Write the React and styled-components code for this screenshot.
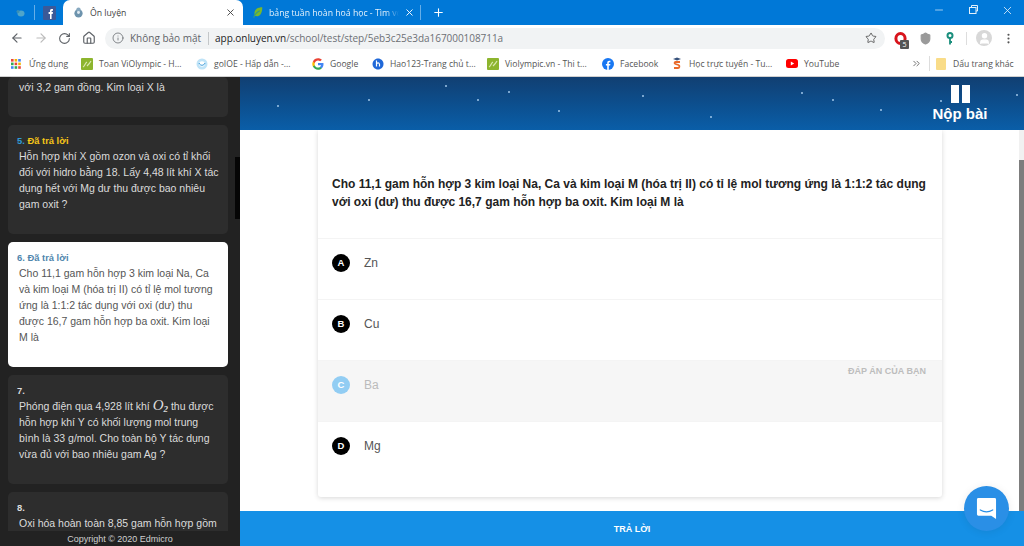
import React from "react";
import styled, { createGlobalStyle } from "styled-components";
import { ArrowLeft, ArrowRight, RotateCw, Home, Info, Star, X, Plus, Minus, MoreVertical, User, Shield, ChevronsRight } from "lucide-react";

const Global = createGlobalStyle`
  html, body { margin: 0; padding: 0; height: 100%; overflow: hidden; background: #fff; }
  * { box-sizing: border-box; }
  #root { height: 100%; }
`;

const Shell = styled.div`
  width: 1024px; height: 546px; display: flex; flex-direction: column; overflow: hidden;
  font-family: "Liberation Sans", Arial, sans-serif;
`;
const TabStrip = styled.div`
  height: 25px; background: #0078d7; display: flex; align-items: flex-end; color: #fff;
  font-family: "Open Sans", "Noto Sans", sans-serif; font-size: 8.7px; flex: none;
`;
const PinnedTab = styled.div`
  width: ${p => p.$w}px; height: 25px; padding-left: ${p => p.$pl || 0}px; display: flex; align-items: center; justify-content: center; flex: none;
`;
const TabSep = styled.div`width: 1px; height: 15px; background: #66aee8; margin-bottom: 5px; flex: none;`;
const ActiveTab = styled.div`
  width: 180px; height: 25px; background: #fff; color: #444; border-radius: 7px 7px 0 0;
  display: flex; align-items: center; gap: 6px; padding: 0 7px 0 10px; flex: none;
`;
const InactiveTab = styled.div`
  width: 177px; height: 25px; display: flex; align-items: center; gap: 5px; padding: 0 5px 0 9px; flex: none; color: #e4f1fb;
`;
const TabTitle = styled.span`
  flex: 1; min-width: 0; white-space: nowrap; overflow: hidden;
  mask-image: ${p => p.$fade ? "linear-gradient(90deg,#000 90%,transparent)" : "none"};
`;
const TabClose = styled.span`display: flex; flex: none; color: ${p => p.$c};`;
const NewTab = styled.div`width: 34px; height: 25px; display: flex; align-items: center; justify-content: center; flex: none;`;
const WinControls = styled.div`
  margin-left: auto; height: 25px; display: flex; align-items: flex-start; padding-top: 4px; gap: 22px; padding-right: 10px;
  color: #cfe6f8;
`;
const Toolbar = styled.div`
  height: 26px; background: #fff; display: flex; align-items: center; flex: none; padding: 0 0 0 10px; color: #555;
`;
const NavButton = styled.div`
  width: ${p => p.$w || 24}px; display: flex; align-items: center; justify-content: flex-start; color: ${p => p.$c || "#5f6368"}; flex: none;
`;
const Omnibox = styled.div`
  width: 780px; height: 21px; margin-left: 1px; background: #f1f3f4; border-radius: 11px; display: flex; align-items: center;
  padding: 0 8px 0 7px; font-family: "Open Sans", "Noto Sans", sans-serif; font-size: 10px; color: #5f6368; flex: none;
`;
const SecurityText = styled.span`margin-left: 6px; padding-right: 7px; border-right: 1px solid #c4c7c9; line-height: 13px; white-space: nowrap;`;
const Url = styled.span`margin-left: 6px; color: #6d7074; white-space: nowrap; flex: 1; letter-spacing: -0.05px; b { font-weight: 400; color: #222; }`;
const Extensions = styled.div`display: flex; align-items: center; margin-left: 6px;`;
const ExtIcon = styled.div`width: ${p => p.$w}px; display: flex; align-items: center; justify-content: center; position: relative; flex: none;`;
const ExtBadge = styled.span`
  position: absolute; right: 1px; bottom: -4px; width: 9px; height: 9px; background: #555; color: #fff;
  font-size: 7px; line-height: 9px; text-align: center; border-radius: 1px; font-family: "Open Sans", sans-serif;
`;
const ToolSep = styled.div`width: 1px; height: 13px; background: #ddd; margin: 0 9px 0 6px; flex: none;`;
const Avatar = styled.div`
  width: 16px; height: 16px; border-radius: 50%; background: #d8d8d8; display: flex; align-items: center; justify-content: center; color: #fff; flex: none;
`;
const Bookmarks = styled.div`
  height: 26px; background: #fff; display: flex; align-items: center; padding: 0 0 0 11px; flex: none;
  font-family: "Open Sans", "Noto Sans", sans-serif; font-size: 8.6px; color: #555;
  border-bottom: 1px solid #d0d0d0;
`;
const Bookmark = styled.div`
  width: ${p => p.$w}px; display: flex; align-items: center; gap: ${p => p.$gap || 6}px; white-space: nowrap; flex: none;
`;
const OverflowBtn = styled.div`margin-left: 24px; width: 16px; color: #666; display: flex; flex: none;`;
const BmSep = styled.div`width: 1px; height: 15px; background: #ddd; margin: 0 6px 0 2px; flex: none;`;

const Page = styled.div`flex: 1; min-height: 0; display: flex;`;
const Sidebar = styled.aside`
  width: 240px; flex: none; background: #222; display: flex; flex-direction: column; color: #e2e2e2; position: relative;
`;
const SideThumb = styled.div`position: absolute; right: 0; top: 80px; width: 5px; height: 62px; background: #050505;`;
const QuestionList = styled.div`
  height: 454px; flex: none; overflow: hidden; padding: 0 12px 0 8px; display: flex; flex-direction: column; gap: 8px;
`;
const QCard = styled.div`
  height: ${p => p.$h}px; flex: none; border-radius: 5px; padding: ${p => p.$top ? "2px 9px 0 11px" : "10px 9px 0 11px"};
  background: ${p => p.$active ? "#fff" : "#2d2d2d"}; color: ${p => p.$active ? "#555" : "#dcdcdc"};
  font-size: 10.5px; line-height: 16px;
`;
const QStatus = styled.div`
  font-size: 9.4px; font-weight: 700; line-height: 12px; margin: 0 0 1px -2px;
  color: ${p => p.$active ? "#4f86ad" : p.$done ? "#f5c518" : "#ddd"};
  span { color: ${p => p.$active ? "#4f86ad" : p.$done ? "#2f9bd6" : "#ddd"}; }
`;
const QBody = styled.div`margin: 0;`;
const Formula = styled.span`
  font-family: "Liberation Serif", serif; font-style: italic; font-size: 15px; line-height: 0;
  sub { font-size: 9px; font-weight: 700; line-height: 0; vertical-align: -2px; }
`;
const Copyright = styled.div`flex: 1; text-align: center; font-size: 9px; line-height: 14px; color: #d0d0d0; padding-top: 1px;`;

const Main = styled.main`flex: 1; min-width: 0; display: flex; flex-direction: column; position: relative;`;
const Header = styled.header`
  height: 53px; flex: none; position: relative; color: #fff;
  background: linear-gradient(180deg, #113f72 0%, #0c5090 55%, #0a5ea8 100%);
  display: flex; justify-content: flex-end;
`;
const SubmitBtn = styled.div`
  width: 92px; margin-right: 18px; display: flex; flex-direction: column; align-items: center; padding-top: 8px;
  font-size: 15px; font-weight: 700; line-height: 16px;
`;
const PauseBars = styled.div`
  display: flex; gap: 3px; margin-bottom: 3px;
  i { display: block; width: 8px; height: 18px; background: #fff; }
`;
const Star2 = styled.i`position: absolute; width: 2px; height: 2px; border-radius: 50%; background: #9fc6e8; left: ${p => p.$x}px; top: ${p => p.$y}px;`;
const Content = styled.div`flex: 1; min-height: 0; display: flex; background: #fff;`;
const Scroller = styled.div`flex: 1; display: flex; justify-content: center; padding-left: 1px;`;
const Card = styled.div`
  width: 624px; height: 367px; background: #fff; border-radius: 0 0 3px 3px; box-shadow: 0 1px 5px rgba(0,0,0,.16);
  display: flex; flex-direction: column;
`;
const Question = styled.div`
  height: 108px; flex: none; padding: 45px 14px 0 14px; font-size: 12px; line-height: 18px; font-weight: 700; color: #222;
`;
const Option = styled.div`
  height: 61px; flex: none; border-top: 1px solid #f4f4f4; padding: 15px 14px 0; display: flex; align-items: flex-start; gap: 14px; position: relative;
  background: ${p => p.$sel ? "#f6f6f6" : "#fff"}; color: ${p => p.$sel ? "#bbb" : "#555"};
  font-size: 12px; line-height: 18px;
`;
const Letter = styled.span`
  width: 18px; height: 18px; border-radius: 50%; background: ${p => p.$sel ? "#92cdf3" : "#000"}; color: #fff;
  font-size: 9.5px; font-weight: 700; display: flex; align-items: center; justify-content: center; flex: none;
`;
const YourAnswer = styled.span`
  position: absolute; right: 16px; top: 1px; font-size: 9px; font-weight: 700; color: #bdbdbd;
`;
const Scrollbar = styled.div`
  width: 5px; flex: none; background: #f1f1f1; display: flex; flex-direction: column; padding-top: 30px;
  i { display: block; flex: 1; background: #7d7d7d; }
`;
const AnswerBar = styled.footer`
  height: 35px; flex: none; background: #1590e6; color: #fff; font-size: 9px; font-weight: 700;
  display: flex; align-items: center; justify-content: center;
`;
const ChatBubble = styled.div`
  position: absolute; right: 15px; bottom: 15px; width: 45px; height: 45px; border-radius: 50%; background: #2a8fe6;
  display: flex; align-items: center; justify-content: center; box-shadow: 0 1px 8px rgba(0,0,0,.08);
`;

const Leaf = ({ s = 12 }) => (
  <svg width={s} height={s} viewBox="0 0 12 12"><rect width="12" height="12" rx="1" fill="#8db52e" /><path d="M2 9c2-1 2-4 4-5M6 8c1-1 3-3 4-5" stroke="#dbe8b0" strokeWidth="1.2" fill="none" /></svg>
);
const Owl = () => (
  <svg width="11" height="11" viewBox="0 0 12 12"><ellipse cx="6" cy="7" rx="4.5" ry="4.5" fill="#6d93ad" /><circle cx="6" cy="3" r="2.4" fill="#88a9c0" /><circle cx="6" cy="6" r="1.6" fill="#dfeaf2" /></svg>
);
const TinyBird = () => (
  <svg width="9" height="8" viewBox="0 0 9 8"><ellipse cx="5" cy="4.500" rx="3.500" ry="3" fill="#4fa5c9" /><circle cx="2" cy="2.500" r="1.500" fill="#3a8fb5" /></svg>
);
const FbSquare = () => (
  <svg width="13" height="14" viewBox="0 0 13 14"><rect width="13" height="14" rx="1" fill="#3b5998" /><path d="M7 13V8H5.600V6H7V4.800C7 3.400 7.900 3 9 3h1v1.800H9.300c-.5 0-.7.3-.7.7V6H10l-.3 2H8.600V13z" fill="#fff" /></svg>
);
const LeafSwirl = () => (
  <svg width="12" height="13" viewBox="0 0 14 14"><path d="M12 1C6 1 2 4 3 10c1 2 5 2 7-1 1.500-2 2-5 2-8z" fill="#79b82c" /><path d="M2 13c1-4 3-6 7-8" stroke="#2e9a8c" strokeWidth="1.500" fill="none" /></svg>
);
const Apps = () => (
  <svg width="10" height="10" viewBox="0 0 10 10">
    {[["#e8453c", "#f4b400", "#4285f4"], ["#34a853", "#e8453c", "#f4b400"], ["#4285f4", "#34a853", "#e8453c"]].map((r, y) => r.map((c, x) => <rect key={`${x}${y}`} x={x * 3.6} y={y * 3.6} width="2.600" height="2.600" fill={c} />))}
  </svg>
);
const Globe = () => (
  <svg width="12" height="12" viewBox="0 0 12 12"><circle cx="6" cy="6" r="5.500" fill="#bfe3f7" /><circle cx="6" cy="6" r="2.800" fill="#fff" /><path d="M3 5c1 3 5 3 6 0" stroke="#3a9ad9" fill="none" /></svg>
);
const GoogleG = () => (
  <svg width="12" height="12" viewBox="0 0 48 48"><path fill="#4285F4" d="M46 24.500c0-1.600-.1-3.100-.4-4.500H24v8.500h12.400c-.5 2.900-2.100 5.300-4.500 6.900v5.700h7.300C43.500 36.700 46 31.100 46 24.500z" /><path fill="#34A853" d="M24 47c6.100 0 11.300-2 15.100-5.500l-7.300-5.700c-2 1.400-4.700 2.200-7.800 2.200-6 0-11-4-12.800-9.500H3.700v5.900C7.500 42 15.200 47 24 47z" /><path fill="#FBBC05" d="M11.200 28.500c-.5-1.400-.7-2.900-.7-4.500s.3-3.100.7-4.500v-5.900H3.700C2.200 16.700 1 20.200 1 24s1.200 7.300 2.700 10.400z" /><path fill="#EA4335" d="M24 10c3.400 0 6.400 1.200 8.800 3.400l6.500-6.500C35.300 3.200 30.100 1 24 1 15.200 1 7.500 6 3.700 13.600l7.500 5.900C13 14 18 10 24 10z" /></svg>
);
const Hao = () => (
  <svg width="12" height="12" viewBox="0 0 12 12"><path d="M6 .5c3 0 5.500 2.400 5.500 5.500S9 11.500 6 11.500.5 9 .5 6 3 .5 6 .5z" fill="#2068d8" /><path d="M4.500 2.500v6M4.500 5.500c2-1.500 3.500-.5 3 3" stroke="#fff" strokeWidth="1.200" fill="none" /></svg>
);
const FbRound = () => (
  <svg width="12" height="12" viewBox="0 0 12 12"><circle cx="6" cy="6" r="6" fill="#1877f2" /><path d="M6.800 12V7.500h1.300L8.400 6H6.800V5c0-.5.200-.8.800-.8h.8V2.800C8 2.700 7.600 2.700 7.200 2.700 6 2.700 5.200 3.400 5.200 4.800V6H3.900v1.500h1.300V12z" fill="#fff" /></svg>
);
const Scholar = () => (
  <svg width="10" height="13" viewBox="0 0 10 13"><path d="M1 2l4-1.500L9 2 5 3.500z" fill="#35507a" /><path d="M8 5H3.500C2.500 5 2 6.500 3.500 7l3 1c1.500.6 1 3-.5 3H2" stroke="#ea6a2a" strokeWidth="1.800" fill="none" /></svg>
);
const YouTubeIcon = () => (
  <svg width="12" height="9" viewBox="0 0 12 9"><rect width="12" height="9" rx="2.500" fill="#f00" /><path d="M4.800 2.500v4l3.400-2z" fill="#fff" /></svg>
);
const Folder = () => (
  <svg width="10" height="12" viewBox="0 0 10 12"><rect width="10" height="12" rx="1" fill="#f9dc88" /></svg>
);
const Opera = () => (
  <svg width="13" height="13" viewBox="0 0 13 13"><ellipse cx="6.500" cy="6.500" rx="4.600" ry="5" fill="none" stroke="#d8141c" strokeWidth="3" /></svg>
);
const VerticalKey = () => (
  <svg width="8" height="13" viewBox="0 0 8 13"><circle cx="4" cy="3.500" r="2.500" fill="none" stroke="#1b8f7d" strokeWidth="2" /><path d="M4 6v6.500M4 10h2" stroke="#1b8f7d" strokeWidth="1.800" fill="none" /></svg>
);
const Intercom = () => (
  <svg width="21" height="23" viewBox="0 0 22 24">
    <path d="M2.500 1h17A1.500 1.500 0 0 1 21 2.500V23l-5-3.500H2.500A1.500 1.500 0 0 1 1 18V2.500A1.500 1.500 0 0 1 2.500 1z" fill="#fff" />
    <path d="M4.500 13.500c4 2.400 9 2.400 13 0" stroke="#2a8fe6" strokeWidth="1.300" fill="none" strokeLinecap="round" />
  </svg>
);

const stars = [[37, 28], [128, 22], [205, 8], [237, 22], [268, 14], [402, 18], [470, 39], [592, 22], [561, 15], [700, 23], [640, 32], [318, 33], [776, 17]];

const bookmarks = [
  { w: 70, icon: <Apps />, label: "Ứng dụng", gap: 8 },
  { w: 115, icon: <Leaf />, label: "Toan ViOlympic - H..." },
  { w: 116, icon: <Globe />, label: "goIOE - Hấp dẫn -..." },
  { w: 60, icon: <GoogleG />, label: "Google" },
  { w: 115, icon: <Hao />, label: "Hao123-Trang chủ t..." },
  { w: 115, icon: <Leaf />, label: "Violympic.vn - Thi t..." },
  { w: 70, icon: <FbRound />, label: "Facebook" },
  { w: 114, icon: <Scholar />, label: "Học trực tuyến - Tu...", gap: 7 },
  { w: 101, icon: <YouTubeIcon />, label: "YouTube" },
];

export default function App() {
  return (
    <Shell>
      <Global />
      <TabStrip>
        <PinnedTab $w={34} $pl={6}><TinyBird /></PinnedTab>
        <TabSep />
        <PinnedTab $w={28}><FbSquare /></PinnedTab>
        <ActiveTab>
          <Owl />
          <TabTitle>Ôn luyện</TabTitle>
          <TabClose $c="#444"><X size={11} strokeWidth={2} /></TabClose>
        </ActiveTab>
        <InactiveTab>
          <LeafSwirl />
          <TabTitle $fade>bảng tuần hoàn hoá học - Tìm với Google</TabTitle>
          <TabClose $c="#fff"><X size={11} strokeWidth={2} /></TabClose>
        </InactiveTab>
        <TabSep />
        <NewTab><Plus size={13} color="#fff" strokeWidth={2} /></NewTab>
        <WinControls>
          <Minus size={12} strokeWidth={1.500} />
          <svg width="12" height="12" viewBox="0 0 12 12" fill="none" stroke="#e4f1fb"><rect x="2.500" y="3.500" width="6.500" height="6" /><path d="M4.500 3.500V1.500H10.500V7H9" /></svg>
          <X size={13} strokeWidth={1.500} color="#e4f1fb" />
        </WinControls>
      </TabStrip>
      <Toolbar>
        <NavButton><ArrowLeft size={14} strokeWidth={2} /></NavButton>
        <NavButton $c="#bbb"><ArrowRight size={14} strokeWidth={2} /></NavButton>
        <NavButton><RotateCw size={13} strokeWidth={2} /></NavButton>
        <NavButton $w={22}><Home size={14} strokeWidth={2} /></NavButton>
        <Omnibox>
          <Info size={12} strokeWidth={1.500} />
          <SecurityText>Không bảo mật</SecurityText>
          <Url><b>app.onluyen.vn</b>/school/test/step/5eb3c25e3da167000108711a</Url>
          <Star size={12} strokeWidth={1.600} color="#444" />
        </Omnibox>
        <Extensions>
          <ExtIcon $w={19}><Opera /><ExtBadge>5</ExtBadge></ExtIcon>
          <ExtIcon $w={30}><Shield size={13} fill="#9a9a9a" color="#9a9a9a" /></ExtIcon>
          <ExtIcon $w={20}><VerticalKey /></ExtIcon>
          <ToolSep />
          <Avatar><User size={13} fill="#fff" /></Avatar>
          <ExtIcon $w={32}><MoreVertical size={13} color="#555" /></ExtIcon>
        </Extensions>
      </Toolbar>
      <Bookmarks>
        {bookmarks.map(b => (
          <Bookmark key={b.label} $w={b.w} $gap={b.gap}>{b.icon}<span>{b.label}</span></Bookmark>
        ))}
        <OverflowBtn><ChevronsRight size={11} /></OverflowBtn>
        <BmSep />
        <Bookmark $w={78} $gap={7}><Folder /><span>Dấu trang khác</span></Bookmark>
      </Bookmarks>
      <Page>
        <Sidebar>
          <QuestionList>
            <QCard $h={40} $top><QBody>với 3,2 gam đồng. Kim loại X là</QBody></QCard>
            <QCard $h={109}>
              <QStatus $done><span>5.</span> Đã trả lời</QStatus>
              <QBody>Hỗn hợp khí X gồm ozon và oxi có tỉ khối đối với hidro bằng 18. Lấy 4,48 lít khí X tác dụng hết với Mg dư thu được bao nhiêu gam oxit ?</QBody>
            </QCard>
            <QCard $h={125} $active>
              <QStatus $active><span>6.</span> Đã trả lời</QStatus>
              <QBody>Cho 11,1 gam hỗn hợp 3 kim loại Na, Ca và kim loại M (hóa trị II) có tỉ lệ mol tương ứng là 1:1:2 tác dụng với oxi (dư) thu được 16,7 gam hỗn hợp ba oxit. Kim loại M là</QBody>
            </QCard>
            <QCard $h={109}>
              <QStatus><span>7.</span></QStatus>
              <QBody>Phóng điện qua 4,928 lít khí <Formula>O<sub>2</sub></Formula> thu được hỗn hợp khí Y có khối lượng mol trung bình là 33 g/mol. Cho toàn bộ Y tác dụng vừa đủ với bao nhiêu gam Ag ?</QBody>
            </QCard>
            <QCard $h={110}>
              <QStatus><span>8.</span></QStatus>
              <QBody>Oxi hóa hoàn toàn 8,85 gam hỗn hợp gồm</QBody>
            </QCard>
          </QuestionList>
          <Copyright>Copyright © 2020 Edmicro</Copyright>
          <SideThumb />
        </Sidebar>
        <Main>
          <Header>
            {stars.map(([x, y]) => <Star2 key={`${x}-${y}`} $x={x} $y={y} />)}
            <SubmitBtn>
              <PauseBars><i /><i /></PauseBars>
              Nộp bài
            </SubmitBtn>
          </Header>
          <Content>
            <Scroller>
              <Card>
                <Question>Cho 11,1 gam hỗn hợp 3 kim loại Na, Ca và kim loại M (hóa trị II) có tỉ lệ mol tương ứng là 1:1:2 tác dụng với oxi (dư) thu được 16,7 gam hỗn hợp ba oxit. Kim loại M là</Question>
                <Option><Letter>A</Letter>Zn</Option>
                <Option><Letter>B</Letter>Cu</Option>
                <Option $sel><Letter $sel>C</Letter>Ba<YourAnswer>ĐÁP ÁN CỦA BẠN</YourAnswer></Option>
                <Option><Letter>D</Letter>Mg</Option>
              </Card>
            </Scroller>
            <Scrollbar><i /></Scrollbar>
          </Content>
          <AnswerBar>TRẢ LỜI</AnswerBar>
          <ChatBubble><Intercom /></ChatBubble>
        </Main>
      </Page>
    </Shell>
  );
}
